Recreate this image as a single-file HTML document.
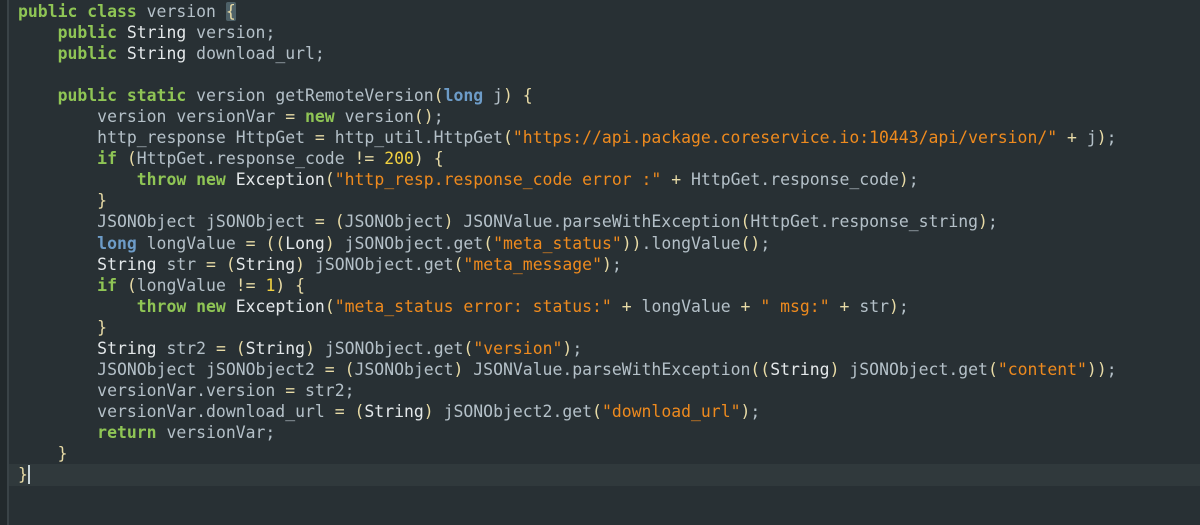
<!DOCTYPE html>
<html><head><meta charset="utf-8"><style>
html,body{margin:0;padding:0;width:1200px;height:525px;overflow:hidden;background:#283034;}
.g{position:absolute;left:0;top:0;width:7px;height:525px;background:#22292c;border-right:2px solid #3a4347;}
.hl{position:absolute;left:9px;top:464px;width:1191px;height:22px;background:#30393c;}
pre{position:absolute;left:18px;top:1px;margin:0;font-family:"DejaVu Sans Mono","Liberation Mono",monospace;font-size:16.45px;line-height:21.05px;color:#b4c0c8;}
.k{color:#8fc555;font-weight:bold}
.t{color:#e4e8ea}
.p{color:#e8dba6}
.s{color:#ee8a1e}
.n{color:#f0d040}
.l{color:#6d9cc8;font-weight:bold}
.b{background:#4e6168;color:#e8dba6;border-radius:2px}
.c{border-right:2px solid #c8d4d8}
</style></head><body>
<div class="g"></div><div class="hl"></div>
<pre><span class="k">public class</span> version <span class="b">{</span>
    <span class="k">public</span> <span class="t">String</span> version;
    <span class="k">public</span> <span class="t">String</span> download_url;

    <span class="k">public static</span> version getRemoteVersion<span class="p">(</span><span class="l">long</span> j<span class="p">)</span> <span class="p">{</span>
        version versionVar <span class="p">=</span> <span class="k">new</span> version<span class="p">()</span>;
        http_response HttpGet <span class="p">=</span> http_util.HttpGet<span class="p">(</span><span class="s">"https://api.package.coreservice.io:10443/api/version/"</span> <span class="p">+</span> j<span class="p">)</span>;
        <span class="k">if</span> <span class="p">(</span>HttpGet.response_code <span class="p">!=</span> <span class="n">200</span><span class="p">)</span> <span class="p">{</span>
            <span class="k">throw new</span> <span class="t">Exception</span><span class="p">(</span><span class="s">"http_resp.response_code error :"</span> <span class="p">+</span> HttpGet.response_code<span class="p">)</span>;
        <span class="p">}</span>
        JSONObject jSONObject <span class="p">=</span> <span class="p">(</span>JSONObject<span class="p">)</span> JSONValue.parseWithException<span class="p">(</span>HttpGet.response_string<span class="p">)</span>;
        <span class="l">long</span> longValue <span class="p">=</span> <span class="p">((</span><span class="t">Long</span><span class="p">)</span> jSONObject.get<span class="p">(</span><span class="s">"meta_status"</span><span class="p">))</span>.longValue<span class="p">()</span>;
        <span class="t">String</span> str <span class="p">=</span> <span class="p">(</span><span class="t">String</span><span class="p">)</span> jSONObject.get<span class="p">(</span><span class="s">"meta_message"</span><span class="p">)</span>;
        <span class="k">if</span> <span class="p">(</span>longValue <span class="p">!=</span> <span class="n">1</span><span class="p">)</span> <span class="p">{</span>
            <span class="k">throw new</span> <span class="t">Exception</span><span class="p">(</span><span class="s">"meta_status error: status:"</span> <span class="p">+</span> longValue <span class="p">+</span> <span class="s">" msg:"</span> <span class="p">+</span> str<span class="p">)</span>;
        <span class="p">}</span>
        <span class="t">String</span> str2 <span class="p">=</span> <span class="p">(</span><span class="t">String</span><span class="p">)</span> jSONObject.get<span class="p">(</span><span class="s">"version"</span><span class="p">)</span>;
        JSONObject jSONObject2 <span class="p">=</span> <span class="p">(</span>JSONObject<span class="p">)</span> JSONValue.parseWithException<span class="p">((</span><span class="t">String</span><span class="p">)</span> jSONObject.get<span class="p">(</span><span class="s">"content"</span><span class="p">))</span>;
        versionVar.version <span class="p">=</span> str2;
        versionVar.download_url <span class="p">=</span> <span class="p">(</span><span class="t">String</span><span class="p">)</span> jSONObject2.get<span class="p">(</span><span class="s">"download_url"</span><span class="p">)</span>;
        <span class="k">return</span> versionVar;
    <span class="p">}</span>
<span class="p c">}</span></pre>
</body></html>
